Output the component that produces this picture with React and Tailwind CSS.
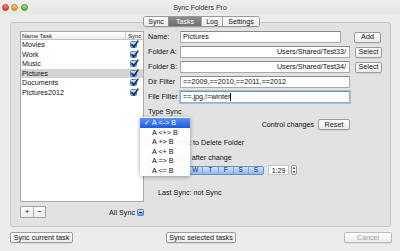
import React from "react";

const tasks = [
  { name: "Movies" },
  { name: "Work" },
  { name: "Music" },
  { name: "Pictures", sel: true },
  { name: "Documents" },
  { name: "Pictures2012" },
];

function BlueCheck({ mixed }) {
  return (
    <span className="relative inline-block w-[7px] h-[7px] rounded-[1.5px] border border-[#4d7cbf] bg-gradient-to-b from-[#d4e7fc] to-[#5d9de8]">
      {mixed ? (
        <span className="absolute left-[1px] top-[2px] w-[3px] h-[1px] bg-[#1b2d55]" />
      ) : (
        <svg className="absolute left-[-1px] top-[-2px]" width="9" height="9" viewBox="0 0 10 10">
          <path d="M2.2 5.2 L4.3 7.6 L8.8 1.2" fill="none" stroke="#15244a" strokeWidth="1.7" strokeLinecap="round" strokeLinejoin="round" />
        </svg>
      )}
    </span>
  );
}

function EmptyCheck() {
  return <span className="inline-block w-[7px] h-[7px] rounded-[1.5px] border border-[#8e8e8e] bg-gradient-to-b from-white to-[#e4e4e4]" />;
}

function Btn({ className = "", children }) {
  return (
    <div className={"h-[11px] flex items-center justify-center rounded-[2px] border border-[#9c9c9c] bg-gradient-to-b from-white to-[#ebebeb] shadow-[0_0.5px_0.5px_rgba(0,0,0,0.15)] " + className}>
      {children}
    </div>
  );
}

function Field({ className = "", children }) {
  return (
    <div className={"h-[12px] bg-white border border-[#a9a9a9] border-t-[#8a8a8a] flex items-center px-[2px] overflow-hidden whitespace-nowrap " + className}>
      {children}
    </div>
  );
}

export default function App() {
  return (
    <div className="w-[400px] h-[251px] bg-[#ececec] overflow-hidden font-['Liberation_Sans',Arial,sans-serif] text-[7.2px] leading-none text-[#111] flex flex-col">
      {/* title bar */}
      <div className="h-[14px] grid grid-cols-[1fr_auto_1fr] items-center bg-gradient-to-b from-[#efefef] to-[#e6e6e6]">
        <div className="flex items-center gap-[2.5px] pl-[1.5px]">
          <span className="w-[7px] h-[7px] rounded-full bg-gradient-to-b from-[#f08a80] to-[#d8342a] border border-[#b0362c]" />
          <span className="w-[7px] h-[7px] rounded-full bg-gradient-to-b from-[#f7d27a] to-[#dd9a1c] border border-[#b98420]" />
          <span className="w-[7px] h-[7px] rounded-full bg-gradient-to-b from-[#a8dc7c] to-[#5fae2f] border border-[#4f8e2a]" />
        </div>
        <div className="text-[#333] text-[7px]">Sync Folders Pro</div>
        <div />
      </div>

      {/* tab box */}
      <div className="mt-[8px] ml-[10px] w-[381px] h-[205px] border border-[#c6c6c6] bg-[#e2e2e2] rounded-[3px] relative">
        {/* tabs */}
        <div className="absolute top-[-7px] left-[132px] flex h-[11px] rounded-[3px] border border-[#999] overflow-hidden shadow-[0_0.5px_0.5px_rgba(0,0,0,0.15)] text-[7px]">
          <div className="w-[24px] flex items-center justify-center bg-gradient-to-b from-white to-[#ececec]">Sync</div>
          <div className="w-[33px] flex items-center justify-center bg-gradient-to-b from-[#8e8e8e] to-[#6e6e6e] text-white border-l border-[#888]">Tasks</div>
          <div className="w-[21px] flex items-center justify-center bg-gradient-to-b from-white to-[#ececec] border-l border-[#aaa]">Log</div>
          <div className="w-[37px] flex items-center justify-center bg-gradient-to-b from-white to-[#ececec] border-l border-[#aaa]">Settings</div>
        </div>

        <div className="flex pt-[8px] pl-[9px]">
          {/* left column */}
          <div className="w-[124px] flex flex-col">
            <div className="h-[171px] border border-[#a9a9a9] bg-white flex flex-col">
              <div className="h-[8px] flex items-center border-b border-[#c2c2c2] bg-gradient-to-b from-white to-[#ededed] text-[6px] text-[#222]">
                <div className="w-[105px] pl-[1px] h-full flex items-center border-r border-[#cfcfcf]">Name Task</div>
                <div className="pl-[2px]">Sync</div>
              </div>
              {tasks.map((t) => (
                <div key={t.name} className={"h-[9.5px] flex items-center " + (t.sel ? "bg-[#d3d3d3]" : "")}>
                  <div className="w-[109px] pl-[1px]">{t.name}</div>
                  <BlueCheck />
                </div>
              ))}
            </div>
            <div className="mt-[4px] flex items-center justify-between">
              <div className="flex h-[12px] border border-[#a3a3a3] rounded-[1px] bg-gradient-to-b from-white to-[#ececec]">
                <div className="w-[12px] flex items-center justify-center text-[8px]">+</div>
                <div className="w-[12px] flex items-center justify-center text-[8px] border-l border-[#b3b3b3]">−</div>
              </div>
              <div className="flex items-center gap-[2px] pt-[2px]">
                <span>All Sync</span>
                <BlueCheck mixed />
              </div>
            </div>
          </div>

          {/* right column */}
          <div className="ml-[4px] w-[234px] flex flex-col">
            <div className="flex items-center h-[12px]">
              <div className="w-[32px]">Name:</div>
              <Field className="w-[161px]">Pictures</Field>
              <Btn className="ml-[13px] w-[27px]">Add</Btn>
            </div>
            <div className="mt-[3px] flex items-center h-[12px]">
              <div className="w-[32px]">Folder A:</div>
              <Field className="w-[170px] justify-end pr-[3px]">Users/Shared/Test33/</Field>
              <Btn className="ml-[5px] w-[27px]">Select</Btn>
            </div>
            <div className="mt-[3px] flex items-center h-[12px]">
              <div className="w-[32px]">Folder B:</div>
              <Field className="w-[170px] justify-end pr-[3px]">Users/Shared/Test34/</Field>
              <Btn className="ml-[5px] w-[27px]">Select</Btn>
            </div>
            <div className="mt-[3px] flex items-center h-[12px]">
              <div className="w-[32px]">Dir Filter</div>
              <Field className="w-[170px]">==2009,==2010,==2011,==2012</Field>
            </div>
            <div className="mt-[3px] flex items-center h-[12px]">
              <div className="w-[32px]">File Filter</div>
              <Field className="w-[170px] border-[#6c9be0] shadow-[0_0_0_1px_#9cc0ef]">
                ==.jpg,!=winter<span className="w-[0.5px] h-[8px] bg-black" />
              </Field>
            </div>
            <div className="mt-[3px] h-[11px] flex items-center">Type Sync</div>
            <div className="mt-[2px] h-[11px] w-[202px] flex items-center justify-between">
              <div className="relative w-[40px] h-[11px]">
                <div className="absolute left-[-8px] top-[-2px] w-[50px] z-10 bg-white/95 rounded-[2px] shadow-[0_1px_4px_rgba(0,0,0,0.35)] py-[1px]">
                  <div className="relative h-[9.5px] flex items-center pl-[12px] bg-gradient-to-b from-[#5b8ff2] to-[#1d5be0] text-white">
                    <span className="absolute left-[4px]">✓</span>A &lt;-&gt; B
                  </div>
                  <div className="h-[9.5px] flex items-center pl-[12px]">A &lt;+&gt; B</div>
                  <div className="h-[9.5px] flex items-center pl-[12px]">A +&gt; B</div>
                  <div className="h-[9.5px] flex items-center pl-[12px]">A &lt;+ B</div>
                  <div className="h-[9.5px] flex items-center pl-[12px]">A =&gt; B</div>
                  <div className="h-[9.5px] flex items-center pl-[12px]">A &lt;= B</div>
                </div>
              </div>
              <div className="flex items-center">
                <span>Control changes</span>
                <Btn className="ml-[4px] w-[32px]">Reset</Btn>
              </div>
            </div>
            <div className="mt-[8px] h-[9px] flex items-center">
              <EmptyCheck />
              <span className="ml-[2px]">Allow sync to Delete Folder</span>
            </div>
            <div className="mt-[6px] h-[9px] flex items-center">
              <EmptyCheck />
              <span className="ml-[2px]">Auto Sync after change</span>
            </div>
            <div className="mt-[3px] h-[10px] flex items-center">
              <EmptyCheck />
              <div className="ml-[2px] w-[107px] h-[9px] flex rounded-[2px] border border-[#6a8fc6] bg-gradient-to-b from-[#cfe3fa] to-[#8dbaf0] text-[6.5px] text-[#1b2b4a]">
                {["M", "T", "W", "T", "F", "S", "S"].map((d, i) => (
                  <div key={i} className={"flex-1 flex items-center justify-center " + (i ? "border-l border-[#7fa3d6]" : "")}>{d}</div>
                ))}
              </div>
              <div className="ml-[4px] w-[21px] h-[10px] bg-white border border-[#c6c6c6] flex items-center justify-center text-[7px]">1:29</div>
              <div className="ml-[2px] w-[6px] h-[10px] rounded-[2px] border border-[#9a9a9a] bg-gradient-to-b from-white to-[#e6e6e6] flex flex-col items-center justify-center text-[3.5px] leading-[4px]">
                <span>▲</span>
                <span>▼</span>
              </div>
            </div>
            <div className="mt-[13px] h-[9px] flex items-center pl-[10px]">Last Sync: not Sync</div>
          </div>
        </div>
      </div>

      {/* bottom buttons */}
      <div className="mt-[5px] flex items-center">
        <Btn className="ml-[10px] w-[63px]">Sync current task</Btn>
        <Btn className="ml-[93px] w-[70px]">Sync selected tasks</Btn>
        <Btn className="ml-[108px] w-[48px] text-[#9a9a9a] border-[#bdbdbd]">Cancel</Btn>
      </div>
    </div>
  );
}
